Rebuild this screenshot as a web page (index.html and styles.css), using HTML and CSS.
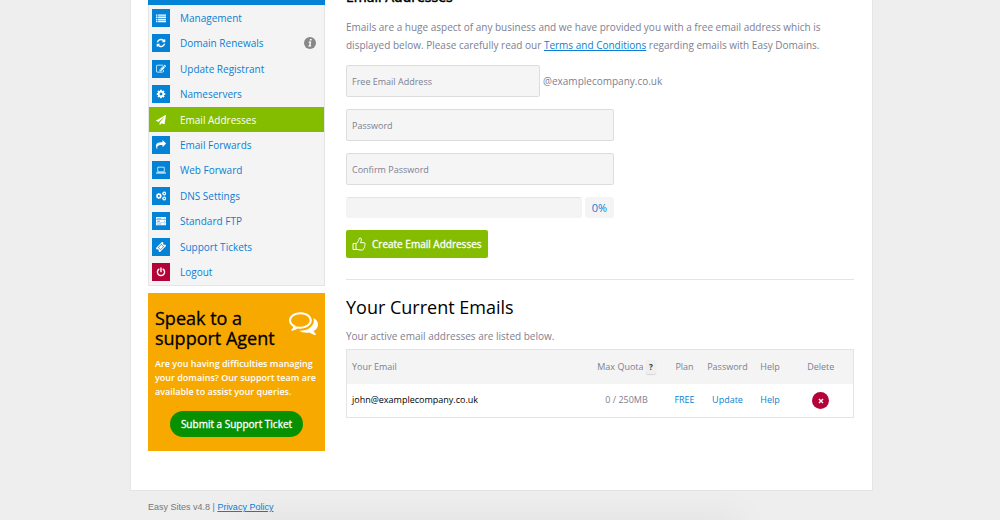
FILE: index.html
```html
<!DOCTYPE html>
<html lang="en">
<head>
    <meta charset="UTF-8">
    <meta name="viewport" content="width=device-width, initial-scale=1.0">
    <title>Email Addresses</title>
    <link rel="stylesheet" href="styles.css">
</head>
<body>
    <svg class="sprite" aria-hidden="true">
        <symbol id="cog" viewBox="0 0 1792 1792"><path d="M1152 896q0-106-75-181t-181-75-181 75-75 181 75 181 181 75 181-75 75-181zm512-109v222q0 12-8 23t-20 13l-185 28q-19 54-39 91 35 50 107 138 10 12 10 25t-9 23q-27 37-99 108t-94 71q-12 0-26-9l-138-108q-44 23-91 38-16 136-29 186-7 28-36 28h-222q-14 0-24.5-8.5t-11.5-21.5l-28-184q-49-16-90-37l-141 107q-10 9-25 9-14 0-25-11-126-114-165-168-7-10-7-23 0-12 8-23 15-21 51-66.5t54-70.5q-27-50-41-99l-183-27q-13-2-21-12.5t-8-23.5v-222q0-12 8-23t19-13l186-28q14-46 39-92-40-57-107-138-10-12-10-24 0-10 9-23 26-36 98.5-107.5t94.5-71.5q13 0 26 10l138 107q44-23 91-38 16-136 29-186 7-28 36-28h222q14 0 24.5 8.5t11.5 21.5l28 184q49 16 90 37l142-107q9-9 24-9 13 0 25 10 129 119 165 170 7 8 7 22 0 12-8 23-15 21-51 66.5t-54 70.5q26 50 41 98l183 28q13 2 21 12.5t8 23.5z"/></symbol>
    </svg>

    <div class="wrapper">
        <aside class="sidebar">
            <div class="menu-head"></div>
            <ul class="menu">
                <li><a href="#"><span class="icon"><svg viewBox="0 0 14 14"><path d="M0 2h2v2H0zm3 0h11v2H3zM0 5h2v2H0zm3 0h11v2H3zM0 8h2v2H0zm3 0h11v2H3zM0 11h2v2H0zm3 0h11v2H3z"/></svg></span>Management</a></li>
                <li><a href="#"><span class="icon"><svg viewBox="0 0 1792 1792"><path d="M1639 1056q0 5-1 7-64 268-268 434.5t-478 166.5q-146 0-282.5-55t-243.5-157l-129 129q-19 19-45 19t-45-19-19-45v-448q0-26 19-45t45-19h448q26 0 45 19t19 45-19 45l-137 137q71 66 161 102t187 36q134 0 250-65t186-179q11-17 53-117 8-23 30-23h192q13 0 22.5 9.5t9.5 22.5zm25-800v448q0 26-19 45t-45 19h-448q-26 0-45-19t-19-45 19-45l138-138q-148-137-349-137-134 0-250 65t-186 179q-11 17-53 117-8 23-30 23h-199q-13 0-22.5-9.5t-9.5-22.5v-7q65-268 270-434.5t480-166.5q146 0 284 55.5t245 156.5l130-129q19-19 45-19t45 19 19 45z"/></svg></span>Domain Renewals</a>
                    <svg class="info" viewBox="0 0 12 12"><circle cx="6" cy="6" r="6"/><path d="M6 2h1.800l-.3 1.600H5.700zM4.700 4.600h2.500l-.7 3.900h.8l-.2 1.100H4.200l.2-1.100h.7l.5-2.800h-.9z"/></svg></li>
                <li><a href="#"><span class="icon"><svg viewBox="0 0 1792 1792"><path d="M888 1184l116-116-152-152-116 116v56h96v96h56zm440-720q-16-16-33 1l-350 350q-17 17-1 33t33-1l350-350q17-17 1-33zm80 594v190q0 119-84.5 203.5t-203.5 84.5h-832q-119 0-203.5-84.5t-84.5-203.5v-832q0-119 84.5-203.5t203.5-84.5h832q63 0 117 25 15 7 18 23 3 17-9 29l-49 49q-14 14-32 8-23-6-45-6h-832q-66 0-113 47t-47 113v832q0 66 47 113t113 47h832q66 0 113-47t47-113v-126q0-13 9-22l64-64q15-15 35-7t20 29zm-96-738l288 288-672 672h-288v-288zm444 132l-92 92-288-288 92-92q28-28 68-28t68 28l152 152q28 28 28 68t-28 68z"/></svg></span>Update Registrant</a></li>
                <li><a href="#"><span class="icon"><svg><use href="#cog"/></svg></span>Nameservers</a></li>
                <li class="active"><a href="#"><span class="icon"><svg viewBox="0 0 1792 1792"><path d="M1764 11q33 24 27 64l-256 1536q-5 29-32 45-14 8-31 8-11 0-24-5l-453-185-242 295q-18 23-49 23-13 0-22-4-19-7-30.5-23.5t-11.5-36.5v-349l864-1059-1069 925-395-162q-37-14-40-55-2-40 32-59l1664-960q15-9 32-9 20 0 36 11z"/></svg></span>Email Addresses</a></li>
                <li><a href="#"><span class="icon"><svg viewBox="0 0 1792 1792"><path d="M1792 640q0 26-19 45l-512 512q-19 19-45 19t-45-19-19-45v-256h-224q-98 0-175.5 6t-154 21.5-133 42.5-105.5 69.5-80 101-48.5 138.5-17.5 181q0 55 5 123 0 6 2.5 23.5t2.5 26.5q0 15-8.5 25t-23.5 10q-16 0-28-17-7-9-13-22t-13.5-30-10.5-24q-127-285-127-451 0-199 53-333 162-403 875-403h224v-256q0-26 19-45t45-19 45 19l512 512q19 19 19 45z"/></svg></span>Email Forwards</a></li>
                <li><a href="#"><span class="icon"><svg viewBox="0 0 14 14"><path fill-rule="evenodd" d="M3 2.500h8q1 0 1 1V9q0 1-1 1H3q-1 0-1-1V3.500q0-1 1-1zm0 1V9h8V3.500zM0 10.500h14v.6q0 .9-1.200.9H1.200Q0 12 0 11.100z"/></svg></span>Web Forward</a></li>
                <li><a href="#"><span class="icon"><svg viewBox="0 0 14 14"><use href="#cog" x="-1" y="2" width="10" height="10"/><use href="#cog" x="8" y="0" width="7" height="7"/><use href="#cog" x="8" y="7" width="7" height="7"/></svg></span>DNS Settings</a></li>
                <li><a href="#"><span class="icon"><svg viewBox="0 0 14 14"><path fill-rule="evenodd" d="M0 1.500h14V5H0zm1.500 1.300v.8h6v-.8zm10 0v.8h1v-.8zM0 5.500h14V9H0zm1.500 1.300v.8h4v-.8zm10 0v.8h1v-.8zM0 9.500h14V13H0zm1.500 1.300v.8h6v-.8zm10 0v.8h1v-.8z"/></svg></span>Standard FTP</a></li>
                <li><a href="#"><span class="icon"><svg viewBox="0 0 14 14"><path fill-rule="evenodd" transform="rotate(-45 7 7)" d="M.5 3h13v2.500a1.500 1.500 0 0 0 0 3V11H.5V8.500a1.500 1.500 0 0 0 0-3zm3 1.500v5h7v-5zm.8.800h5.400v3.400H4.300z"/></svg></span>Support Tickets</a></li>
                <li class="logout"><a href="#"><span class="icon"><svg viewBox="0 0 14 14"><path class="line" d="M4 3a5 5 0 1 0 6 0M7 1.500v5"/></svg></span>Logout</a></li>
            </ul>

            <div class="support">
                <svg class="chat" viewBox="0 0 1792 1792"><path d="M704 384q-153 0-286 52t-211.500 141-78.500 191q0 82 53 158t149 132l97 56-35 84q34-20 62-39l44-31 53 10q78 14 153 14 153 0 286-52t211.500-141 78.500-191-78.500-191-211.500-141-286-52zm0-128q191 0 353.500 68.500t256.500 186.500 94 257-94 257-256.500 186.500-353.500 68.500q-86 0-176-16-124 88-278 128-36 9-86 16h-3q-11 0-20.500-8t-11.500-21q-1-3-1-6.500t.5-6.500 2-6l2.500-5 3.500-5.500 4-5 4.500-5 4-4.500q5-6 23-25t26-29.500 22.500-29 25-38.500 20.500-44q-124-72-195-177t-71-224q0-139 94-257t256.500-186.500 353.500-68.500zm822 1169q10 24 20.500 44t25 38.500 22.500 29 26 29.500 23 25q1 1 4 4.500t4.500 5 4 5 3.500 5.500l2.500 5 2 6 .5 6.500-1 6.500q-3 14-13 22t-22 7q-50-7-86-16-154-40-278-128-90 16-176 16-271 0-472-132 58 4 88 4 161 0 309-45t264-129q125-92 192-212t67-254q0-77-23-152 129 71 204 178t75 230q0 120-71 224.500t-195 176.500z"/></svg>
                <h3>Speak to a<br>support Agent</h3>
                <p>Are you having difficulties managing your domains? Our support team are available to assist your queries.</p>
                <a class="ticket-btn" href="#">Submit a Support Ticket</a>
            </div>
        </aside>

        <main class="content">
            <h1>Email Addresses</h1>
            <p class="intro">Emails are a huge aspect of any business and we have provided you with a free email address which is displayed below. Please carefully read our <a href="#">Terms and Conditions</a> regarding emails with Easy Domains.</p>

            <form class="email-form">
                <div class="address">
                    <input type="text" id="email" placeholder="Free Email Address" aria-label="Free Email Address">
                    <label for="email">@examplecompany.co.uk</label>
                </div>
                <input type="password" placeholder="Password" aria-label="Password">
                <input type="password" placeholder="Confirm Password" aria-label="Confirm Password">
                <div class="strength">
                    <progress value="0" max="100" aria-label="Password strength"></progress>
                    <span class="percent">0%</span>
                </div>
                <button type="button" class="create-btn">
                    <svg viewBox="0 0 14 14"><path d="M1 6.500h3v6H1zM4 6.500C5.500 6 6 4.500 6.500 3.600 7 2.700 6.800 1 8 1c1.600 0 1.800 1.600 1 3.300L8.500 5.700H12c1.300 0 1.500 1.600.6 2.200.6.700.3 1.600-.3 1.900.3.700 0 1.400-.6 1.600.1 1.100-.6 1.600-1.600 1.600H8c-1.500 0-2.700-.8-4-.8"/></svg>
                    Create Email Addresses
                </button>
            </form>

            <h2>Your Current Emails</h2>
            <p>Your active email addresses are listed below.</p>
            <table>
                <thead>
                    <tr>
                        <th class="col-email">Your Email</th>
                        <th class="col-quota">Max Quota <button type="button" class="hint">?</button></th>
                        <th class="col-plan">Plan</th>
                        <th class="col-password">Password</th>
                        <th class="col-help">Help</th>
                        <th class="col-delete">Delete</th>
                    </tr>
                </thead>
                <tbody>
                    <tr>
                        <td class="col-email">john@examplecompany.co.uk</td>
                        <td>0 / 250MB</td>
                        <td><a href="#">FREE</a></td>
                        <td><a href="#">Update</a></td>
                        <td><a href="#">Help</a></td>
                        <td><button type="button" class="delete-btn" aria-label="Delete"><svg viewBox="0 0 6 6"><path d="M1 1l4 4M5 1L1 5"/></svg></button></td>
                    </tr>
                </tbody>
            </table>
        </main>
    </div>

    <footer>Easy Sites v4.8 | <a href="#">Privacy Policy</a></footer>
</body>
</html>
```
FILE: styles.css
```css
* {
    box-sizing: border-box;
}
body {
    margin: 0;
    padding-left: 3px;
    background-color: #eee;
    font-family: 'Open Sans', sans-serif;
    font-size: 10px;
    line-height: 18px;
    color: #7d8092;
    overflow: hidden;
}
a {
    color: #0a7fd4;
}
h1, h2, h3, p {
    margin: 0;
    font-weight: normal;
}
h1, h2, h3 {
    color: #000;
}
button, input {
    font: inherit;
}
.sprite {
    display: none;
}
.wrapper {
    display: flex;
    gap: 21px;
    max-width: 743px;
    margin: -37px auto 0;
    padding: 0 18px 39px 17px;
    background: #fff;
    border: 1px solid #e4e4e4;
}

/* sidebar */
.sidebar {
    flex: 0 0 177px;
}
.menu-head {
    height: 41px;
    background: #0483d6;
}
.menu {
    display: flex;
    flex-direction: column;
    height: 281px;
    margin: 0 0 7px;
    padding: 0;
    list-style: none;
    background: #f4f4f4;
    border: 1px solid #e4e4e4;
    border-top: 0;
}
.menu li {
    flex: 1;
    display: flex;
    align-items: center;
    justify-content: space-between;
    padding: 0 8px 0 3px;
}
.menu a {
    display: flex;
    align-items: center;
    gap: 10px;
    text-decoration: none;
}
.icon {
    display: flex;
    align-items: center;
    justify-content: center;
    width: 18px;
    height: 18px;
    background: #0483d6;
}
.icon svg {
    width: 10px;
    height: 10px;
    fill: #fff;
}
.icon .line {
    fill: none;
    stroke: #fff;
    stroke-width: 2;
    stroke-linecap: round;
}
.menu .active, .active .icon {
    background: #84bd00;
}
.menu .active a {
    color: #fff;
}
.logout .icon {
    background: #b40338;
}
.info {
    width: 12px;
    height: 12px;
    fill: #888;
}
.info path {
    fill: #fff;
}
.support {
    padding: 15px 7px 14px;
    background: #f7a900;
    color: #fff;
    text-align: center;
}
.support h3 {
    font-size: 18px;
    line-height: 20px;
    text-align: left;
    -webkit-text-stroke: 0.3px #000;
}
.support p {
    margin: 9px 0 12px;
    font-size: 9px;
    font-weight: 600;
    line-height: 14px;
    text-align: left;
}
.chat {
    float: right;
    width: 29px;
    height: 29px;
    fill: #fff;
}
.ticket-btn {
    display: inline-block;
    padding: 4px 11px;
    border-radius: 13px;
    background: #079100;
    color: #fff;
    text-decoration: none;
    -webkit-text-stroke: 0.3px #fff;
}

/* content */
.content {
    flex: 1;
    min-width: 0;
    padding-top: 20px;
}
h1, h2 {
    font-size: 18px;
    line-height: 26px;
}
h1 {
    font-size: 14px;
    -webkit-text-stroke: 0.5px #000;
}
.intro {
    margin: 8px 0 11px;
}
.email-form {
    display: flex;
    flex-direction: column;
    align-items: flex-start;
    gap: 12px;
    padding-bottom: 21px;
    border-bottom: 1px solid #e4e4e4;
}
.email-form input {
    width: 268px;
    height: 32px;
    padding: 0 5px;
    background: #f5f5f5;
    border: 1px solid #ddd;
    border-radius: 2px;
    font-size: 9px;
}
.email-form input::placeholder {
    color: #7d8092;
}
.email-form .address {
    display: flex;
    align-items: center;
    gap: 3px;
}
.email-form .address input {
    width: 194px;
}
.strength {
    display: flex;
    gap: 3px;
}
progress {
    appearance: none;
    width: 236px;
    height: 21px;
    border: 0;
    border-radius: 3px;
    overflow: hidden;
}
progress::-webkit-progress-bar {
    background: #f4f4f4;
    box-shadow: inset 0 1px 1px #e4e4e4;
}
progress::-webkit-progress-value {
    background: #84bd00;
}
.percent {
    width: 29px;
    border-radius: 3px;
    background: #f4f4f4;
    color: #0a7fd4;
    font-size: 11px;
    line-height: 21px;
    text-align: center;
}
.create-btn {
    display: flex;
    align-items: center;
    gap: 6px;
    height: 28px;
    padding: 0 6px;
    border: 0;
    border-radius: 2px;
    background: #84bd00;
    color: #fff;
    -webkit-text-stroke: 0.3px #fff;
}
.create-btn svg {
    width: 14px;
    height: 14px;
    fill: none;
    stroke: #fff;
}
h2 {
    margin: 14px 0 7px;
}
table {
    width: 100%;
    margin-top: 4px;
    border-collapse: collapse;
    border: 1px solid #e4e4e4;
    table-layout: fixed;
    font-size: 9px;
}
th, td {
    height: 34px;
    padding: 0;
    font-weight: normal;
    text-align: center;
}
thead {
    background: #f4f4f4;
}
td a {
    text-decoration: none;
}
th.col-email, td.col-email {
    padding-left: 5px;
    text-align: left;
}
td.col-email {
    color: #000;
}
.col-quota {
    width: 78px;
}
.col-plan {
    width: 38px;
}
.col-password {
    width: 48px;
}
.col-help {
    width: 37px;
}
.col-delete {
    width: 65px;
}
.hint {
    padding: 0 3px;
    border: 0;
    border-radius: 2px;
    background: #efefef;
    box-shadow: 0 1px 1px #d4d4d4;
    color: #333;
    font-size: 8px;
    font-weight: bold;
    line-height: 14px;
}
.delete-btn {
    display: inline-flex;
    align-items: center;
    justify-content: center;
    width: 17px;
    height: 17px;
    padding: 0;
    border: 0;
    border-radius: 50%;
    background: #b40338;
    vertical-align: middle;
}
.delete-btn svg {
    width: 6px;
    height: 6px;
    stroke: #fff;
    stroke-width: 1.4;
}

footer {
    max-width: 743px;
    margin: 0 auto;
    padding: 7px 18px;
    font-family: 'Liberation Sans', Arial, sans-serif;
    font-size: 9px;
    color: #777;
}
/* soft shade along the bottom edge */
footer::after {
    content: "";
    position: fixed;
    bottom: -20px;
    left: 24%;
    right: 26%;
    height: 20px;
    box-shadow: 0 0 36px rgba(0, 0, 0, 0.08);
}
```
